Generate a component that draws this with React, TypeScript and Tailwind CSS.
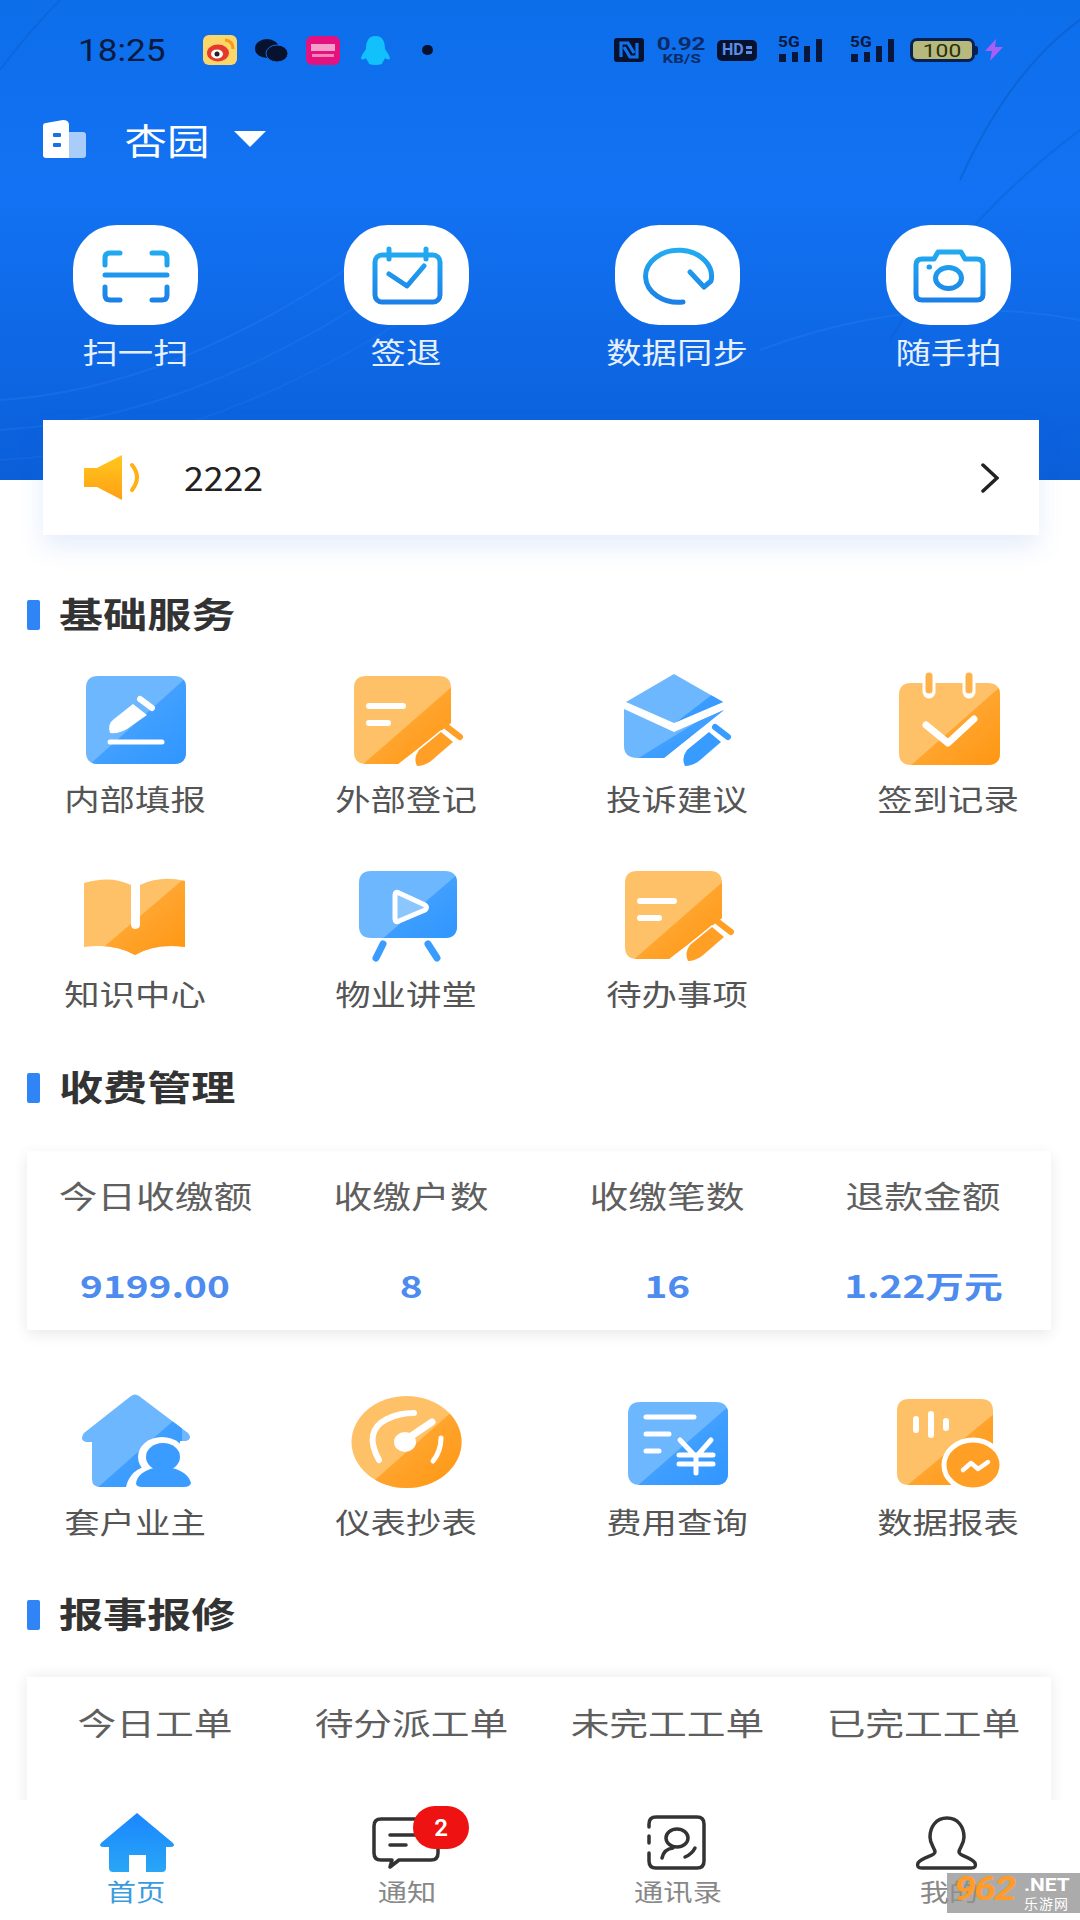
import { type ReactNode } from 'react';

const CJK = '"Noto Sans CJK SC", "Noto Sans", sans-serif';

// the screenshot is stretched sideways, so the text gets scaled too
function Label({ children, className = '' }: { children: ReactNode; className?: string }) {
  return <span className={`inline-block whitespace-nowrap scale-x-[1.22] ${className}`}>{children}</span>;
}

function TwoTone({ id, d, tone, cut }: { id: string; d: string; tone: 'blue' | 'orange'; cut: string }) {
  return (
    <>
      <clipPath id={id}>
        <polygon points={cut} />
      </clipPath>
      <path d={d} fill={tone === 'blue' ? '#6db7ff' : '#ffc168'} />
      <path d={d} fill={tone === 'blue' ? 'url(#dark-blue)' : 'url(#dark-orange)'} clipPath={`url(#${id})`} />
    </>
  );
}

function Pencil({ color }: { color: string }) {
  return (
    <>
      <path d="M80 96 Q76 88 82 80 L104 62 L116 72 L94 91 Q87 96 80 96Z" fill={color} stroke="#fff" strokeWidth="3" paintOrder="stroke" />
      <path d="M110 57 L123 67" stroke={color} strokeWidth="6" strokeLinecap="round" />
    </>
  );
}

const Box = ({ children, dy = 0 }: { children: ReactNode; dy?: number }) => (
  <svg viewBox={`0 ${dy} 140 100`} className="w-[140px] h-[100px] overflow-visible">
    {children}
  </svg>
);

const NOTE = 'M29 6 H102 Q114 6 114 18 V53 L61 94 H29 Q17 94 17 82 V18 Q17 6 29 6Z';

const NoteIcon = ({ id }: { id: string }) => (
  <Box>
    <TwoTone id={id} tone="orange" d={NOTE} cut="118,14 24,96 120,96" />
    <path d="M32 36 H66 M32 53 H51" stroke="#fff" strokeWidth="6" strokeLinecap="round" />
    <Pencil color="#ff9f25" />
  </Box>
);

const icons = {
  report: (
    <Box>
      <TwoTone id="c1" tone="blue" d="M32 6 H108 Q120 6 120 18 V82 Q120 94 108 94 H32 Q20 94 20 82 V18 Q20 6 32 6Z" cut="122,6 22,96 122,96" />
      <path d="M44 63 Q41 54 48 49 L67 34 L81 45 L61 59 Q53 64 44 63Z" fill="#fff" />
      <path d="M74 29 L86 38" stroke="#fff" strokeWidth="6" strokeLinecap="round" />
      <path d="M44 72 H96" stroke="#fff" strokeWidth="5" strokeLinecap="round" />
    </Box>
  ),
  visitor: <NoteIcon id="c2" />,
  complaint: (
    <Box>
      <TwoTone id="c3" tone="blue" d="M66 4 L115 32 L66 53 L18 32Z" cut="118,14 58,60 118,60" />
      <TwoTone id="c3b" tone="blue" d="M16 39 L66 62 L116 40 L56 88 H30 Q16 88 16 76Z" cut="118,34 24,92 118,92" />
      <path d="M77 96 Q73 88 79 80 L101 62 L113 72 L91 91 Q84 96 77 96Z" fill="#379bff" stroke="#fff" strokeWidth="3" paintOrder="stroke" />
      <path d="M107 57 L120 67" stroke="#379bff" strokeWidth="6" strokeLinecap="round" />
    </Box>
  ),
  signin: (
    <Box>
      <TwoTone id="c4" tone="orange" d="M32 13 H109 Q121 13 121 25 V83 Q121 95 109 95 H32 Q20 95 20 83 V25 Q20 13 32 13Z" cut="122,16 30,97 122,97" />
      <path d="M50 6 V22 M90 6 V22" stroke="#fff" strokeWidth="13" strokeLinecap="round" />
      <path d="M50 6 V20 M90 6 V20" stroke="#ffb24a" strokeWidth="7" strokeLinecap="round" />
      <path d="M47 55 L69 73 L95 49" fill="none" stroke="#fff" strokeWidth="7" strokeLinecap="round" strokeLinejoin="round" />
    </Box>
  ),
  book: (
    <Box>
      <TwoTone id="c5" tone="orange" d="M18 18 Q45 10 65 20 V60 Q65 64 69 64 Q74 64 74 60 V20 Q95 10 119 16 V82 Q90 78 69 90 Q48 78 18 82Z" cut="120,12 26,92 120,92" />
    </Box>
  ),
  lecture: (
    <Box>
      <TwoTone id="c6" tone="blue" d="M34 6 H108 Q120 6 120 18 V61 Q120 73 108 73 H34 Q22 73 22 61 V18 Q22 6 34 6Z" cut="122,8 44,75 122,75" />
      <path d="M46 79 L39 93 M91 79 L100 93" stroke="#3a9cff" strokeWidth="7" strokeLinecap="round" />
      <path d="M58 30 Q58 26 62 28 L88 40 Q91 42 88 45 L62 56 Q58 58 58 54Z" fill="#8cc6ff" stroke="#fff" strokeWidth="5" strokeLinejoin="round" />
    </Box>
  ),
  todo: <NoteIcon id="c7" />,
  owner: (
    <Box dy={6}>
      <TwoTone id="c8" tone="blue" d="M65 9 Q69 6 73 9 L122 46 Q127 52 120 54 L114 54 V100 H34 Q26 100 26 92 V55 L20 55 Q13 53 18 46Z" cut="116,26 30,102 116,102" />
      <ellipse cx="96" cy="70" rx="24" ry="20" fill="#fff" />
      <path d="M60 100 Q64 82 84 78 L112 78 L126 100Z" fill="#fff" />
      <ellipse cx="97" cy="70" rx="17" ry="14" fill="#3a9cff" />
      <path d="M70 96 Q72 85 88 81 H106 Q122 85 125 96 Q124 100 118 100 H76 Q70 100 70 96Z" fill="#3a9cff" />
    </Box>
  ),
  meter: (
    <Box dy={6}>
      <clipPath id="c9">
        <polygon points="118,22 30,100 130,104 130,22" />
      </clipPath>
      <ellipse cx="69.5" cy="55" rx="55" ry="46" fill="#ffc168" />
      <ellipse cx="69.5" cy="55" rx="55" ry="46" fill="url(#dark-orange)" clipPath="url(#c9)" />
      <path d="M42 73 Q26 44 50 32 Q62 26 77 26" fill="none" stroke="#fff" strokeWidth="6" strokeLinecap="round" />
      <ellipse cx="68" cy="55" rx="11" ry="10" fill="#fff" />
      <path d="M70 52 L95 35" stroke="#fff" strokeWidth="7" strokeLinecap="round" />
      <path d="M104 51 Q104 64 96 74" fill="none" stroke="#fff" strokeWidth="5" strokeLinecap="round" />
    </Box>
  ),
  fee: (
    <Box dy={6}>
      <TwoTone id="c10" tone="blue" d="M32 15 H108 Q120 15 120 27 V86 Q120 98 108 98 H32 Q20 98 20 86 V27 Q20 15 32 15Z" cut="122,18 28,100 122,100" />
      <path d="M38 30 H86 M38 47 H61 M38 64 H51" stroke="#fff" strokeWidth="5" strokeLinecap="round" />
      <path d="M72 53 L88 70 L103 53 M88 70 V86 M71 68 H105 M71 77 H105" fill="none" stroke="#fff" strokeWidth="5" strokeLinecap="round" />
    </Box>
  ),
  data: (
    <Box dy={6}>
      <TwoTone id="c11" tone="orange" d="M30 12 H102 Q114 12 114 24 V86 Q114 98 102 98 H30 Q18 98 18 86 V24 Q18 12 30 12Z" cut="116,26 26,100 116,100" />
      <path d="M37 32 V43 M52 27 V48 M67 34 V41" stroke="#fff" strokeWidth="6" strokeLinecap="round" />
      <ellipse cx="94" cy="78" rx="29" ry="25" fill="#ff9f25" stroke="#fff" strokeWidth="5" />
      <path d="M84 83 L92 76 L99 82 L109 75" fill="none" stroke="#fff" strokeWidth="4.5" strokeLinecap="round" strokeLinejoin="round" />
    </Box>
  ),
};

const quick = [
  {
    label: '扫一扫',
    icon: <path d="M32 40 V33 Q32 28 37 28 H47 M79 28 H89 Q94 28 94 33 V40 M32 50 H94 M32 62 V70 Q32 75 37 75 H47 M79 75 H89 Q94 75 94 70 V62" />,
  },
  {
    label: '签退',
    icon: (
      <>
        <rect x="31" y="30" width="65" height="47" rx="7" />
        <path d="M45 24 V34 M82 24 V34 M45 49 L63 61 L80 41" />
      </>
    ),
  },
  { label: '数据同步', icon: <path d="M68 77 A33 26 0 1 1 96 56 L89 62 L75 47" /> },
  {
    label: '随手拍',
    icon: (
      <>
        <path d="M36 34 H48 L52 27 H75 L79 34 H91 Q97 34 97 40 V69 Q97 75 91 75 H36 Q30 75 30 69 V40 Q30 34 36 34Z" />
        <ellipse cx="62.5" cy="53" rx="13" ry="10.5" />
        <path d="M43 42 H43.5" />
      </>
    ),
  },
];

const Tile = ({ label, icon }: { label: string; icon: ReactNode }) => (
  <div className="flex flex-col items-center">
    {icon}
    <div className="h-[56px] flex items-center text-[29px] leading-none text-[#555]">
      <Label>{label}</Label>
    </div>
  </div>
);

const SectionTitle = ({ children }: { children: string }) => (
  <div className="h-[60px] flex items-center pl-[27px]">
    <div className="w-[13px] h-[30px] rounded-[2px] bg-[#2f85f5]" />
    <span className="ml-[19px] -mt-[6px] inline-block origin-left scale-x-[1.26] text-[35px] leading-none font-bold text-[#333] whitespace-nowrap">
      {children}
    </span>
  </div>
);

const StatCell = ({ children }: { children: ReactNode }) => (
  <div className="flex justify-center items-center h-[40px] text-[31px] leading-none text-[#5f5f5f]">
    <span className="inline-block whitespace-nowrap scale-x-[1.25]">{children}</span>
  </div>
);

const Signal = () => (
  <div className="relative w-[46px] h-[26px]">
    <span className="absolute left-[1px] -top-[2px] inline-block origin-left scale-x-[1.15] text-[15px] leading-[15px] font-bold text-[#08183c]" style={{ fontFamily: 'Roboto' }}>
      5G
    </span>
    <svg viewBox="0 0 46 26" className="w-[46px] h-[26px]" fill="#08183c">
      <rect x="2" y="17" width="7" height="8" />
      <rect x="15" y="15" width="6" height="10" />
      <rect x="27" y="9" width="6" height="16" />
      <rect x="39" y="2" width="6" height="23" />
    </svg>
  </div>
);

function StatusBar() {
  return (
    <div className="h-[100px] flex items-center justify-between pl-[78px] pr-[77px] text-[#081a40]">
      <div className="flex items-center">
        <span className="w-[87px] inline-block origin-left scale-x-[1.1] text-[32px] leading-none whitespace-nowrap" style={{ fontFamily: 'Roboto' }}>
          18:25
        </span>
        {/* weibo */}
        <svg viewBox="0 0 34 30" className="ml-[38px] w-[34px] h-[30px]">
          <rect width="34" height="30" rx="6" fill="#fbd76a" />
          <ellipse cx="15" cy="18" rx="11" ry="8.5" fill="#e5392b" />
          <ellipse cx="14" cy="19" rx="6" ry="4.5" fill="#fff" />
          <circle cx="14" cy="19" r="2.5" fill="#222" />
          <path d="M22 5 Q30 6 30 14" fill="none" stroke="#f59a1c" strokeWidth="3" />
        </svg>
        {/* wechat */}
        <svg viewBox="0 0 33 23" className="ml-[18px] w-[33px] h-[23px]" fill="#07122f">
          <ellipse cx="12" cy="9.5" rx="12" ry="9.5" />
          <ellipse cx="22" cy="14.5" rx="11" ry="8.5" stroke="#0f6eea" strokeWidth="1" />
        </svg>
        {/* pink app */}
        <div className="ml-[18px] w-[34px] h-[29px] rounded-[6px] bg-[#e4127e] flex flex-col items-center justify-center gap-[3px]">
          <div className="w-[24px] h-[7px] bg-[#f5a0ca]" />
          <div className="w-[22px] h-[3px] bg-[#f283bb]" />
        </div>
        {/* qq */}
        <svg viewBox="0 0 31 29" className="ml-[20px] w-[31px] h-[29px]" fill="#12c0fb">
          <path d="M15.5 0 C7 0 6 8 6 13 C4 16 1 20 1 23 C3 24 5 23 6 22 C7 25 9 26 9 28 Q15.5 30 22 28 C22 26 24 25 25 22 C26 23 28 24 30 23 C30 20 27 16 25 13 C25 8 24 0 15.5 0Z" />
        </svg>
        <div className="ml-[31px] w-[11px] h-[10px] rounded-full bg-[#07122f]" />
      </div>
      <div className="flex items-center">
        {/* nfc */}
        <svg viewBox="0 0 30 24" className="w-[30px] h-[24px]">
          <rect width="30" height="24" rx="3" fill="#07122f" />
          <path d="M7 19 V5 L14 5 L20 15 M23 5 V19 L16 19 L10 9" fill="none" stroke="#1272ee" strokeWidth="3.2" />
        </svg>
        <div className="ml-[13px] w-[49px] flex flex-col items-center font-bold text-[#0b2a66]" style={{ fontFamily: 'Roboto' }}>
          <span className="inline-block scale-x-[1.35] text-[18px] leading-[15px]">0.92</span>
          <span className="inline-block scale-x-[1.3] mt-[2px] text-[13px] leading-[11px]">KB/S</span>
        </div>
        <div className="ml-[11px] w-[40px] h-[21px] rounded-[5px] bg-[#07122f] flex items-center pl-[5px] gap-[2px]">
          <span className="text-[#5b8fe6] text-[16px] leading-none font-bold" style={{ fontFamily: 'Roboto' }}>
            HD
          </span>
          <div className="flex flex-col gap-[2px]">
            <div className="w-[6px] h-[3px] bg-[#5b8fe6]" />
            <div className="w-[6px] h-[3px] bg-[#5b8fe6]" />
          </div>
        </div>
        <div className="ml-[20px]">
          <Signal />
        </div>
        <div className="ml-[26px]">
          <Signal />
        </div>
        <div className="ml-[15px] w-[65px] h-[24px] rounded-[7px] border-[3px] border-[#0a2050] bg-[#b7b97c] flex items-center justify-center text-[19px] leading-none text-[#27300c]" style={{ fontFamily: 'Roboto' }}>
          <span className="inline-block scale-x-[1.2]">100</span>
        </div>
        <div className="w-[3px] h-[9px] bg-[#0a2050] rounded-r-[2px]" />
        <svg viewBox="0 0 18 22" className="ml-[7px] w-[18px] h-[22px]" fill="#a85ff7">
          <path d="M11 0 L0 12 H7 L5 22 L18 8 H10Z" />
        </svg>
      </div>
    </div>
  );
}

function Header() {
  return (
    <div className="relative h-[480px] overflow-hidden bg-gradient-to-b from-[#0d6eea] via-[#1272f3] via-40% to-[#0b5fd9]">
      {/* faint streaks of the header artwork */}
      <svg viewBox="0 0 1080 480" className="absolute inset-0 w-[1080px] h-[480px]" fill="none">
        <path d="M1080 20 Q1010 70 960 180" stroke="#0a56bd" strokeOpacity=".45" strokeWidth="2" />
        <path d="M1080 130 Q960 220 890 340" stroke="#0a56bd" strokeOpacity=".3" strokeWidth="2" />
        <path d="M0 70 Q30 30 60 0" stroke="#0a56bd" strokeOpacity=".3" strokeWidth="2" />
        <path d="M0 400 Q170 390 360 260" stroke="#3d8ff5" strokeOpacity=".22" strokeWidth="2" />
        <path d="M0 430 Q190 420 390 285" stroke="#3d8ff5" strokeOpacity=".18" strokeWidth="2" />
        <path d="M0 460 Q200 450 420 310" stroke="#3d8ff5" strokeOpacity=".15" strokeWidth="2" />
        <path d="M760 350 Q920 290 1080 320" stroke="#3d8ff5" strokeOpacity=".22" strokeWidth="2" />
      </svg>
      <div className="relative">
        <StatusBar />
        <div className="h-[78px] flex items-center pl-[43px]">
          <svg viewBox="0 0 43 38" className="w-[43px] h-[38px]">
            <rect x="20" y="12" width="23" height="26" rx="3" fill="#a8cdf8" />
            <path d="M3 3 L20 0 Q26 0 26 5 V38 H3 Q0 38 0 35 V6 Q0 3 3 3Z" fill="#fff" />
            <rect x="10" y="13" width="8" height="4" rx="1" fill="#1a70e8" />
            <rect x="10" y="23" width="8" height="4" rx="1" fill="#1a70e8" />
          </svg>
          <span className="ml-[45px] inline-block scale-x-[1.18] text-[36px] leading-none text-white whitespace-nowrap">杏园</span>
          <svg viewBox="0 0 32 16" className="ml-[31px] w-[32px] h-[16px]" fill="#fff">
            <path d="M0 0 H32 L16 16Z" />
          </svg>
        </div>
        <div className="mt-[47px] grid grid-cols-[repeat(4,271px)]">
          {quick.map(item => (
            <div key={item.label} className="flex flex-col items-center">
              <div className="w-[125px] h-[100px] rounded-[44px] bg-white">
                <svg viewBox="0 0 125 100" className="w-[125px] h-[100px]" fill="none" stroke="url(#quick-blue)" strokeWidth="5" strokeLinecap="round" strokeLinejoin="round">
                  {item.icon}
                </svg>
              </div>
              <div className="mt-[2px] h-[48px] flex items-center text-[29px] leading-none text-[#e6f0ff]">
                <Label>{item.label}</Label>
              </div>
            </div>
          ))}
        </div>
      </div>
    </div>
  );
}

function Notice() {
  return (
    <div className="relative -mt-[60px] ml-[43px] mr-[41px] h-[115px] bg-white flex items-center shadow-[0_12px_24px_rgba(40,110,220,0.12)]">
      <svg viewBox="0 0 58 45" className="ml-[41px] w-[58px] h-[45px]">
        <defs>
          <linearGradient id="speaker" x1="0" y1="0" x2="0" y2="1">
            <stop offset="0" stopColor="#ffc81e" />
            <stop offset="1" stopColor="#ff9f14" />
          </linearGradient>
        </defs>
        <path d="M0 13 H13 L38 0 V45 L13 32 H0Z" fill="url(#speaker)" />
        <path d="M48 10 Q58 22 48 35" fill="none" stroke="#ffb114" strokeWidth="4" strokeLinecap="round" />
      </svg>
      <span className="ml-[42px] inline-block origin-left scale-x-[1.08] text-[33px] leading-none text-[#222]">2222</span>
      <svg viewBox="0 0 18 30" className="ml-auto mr-[40px] w-[18px] h-[30px]" fill="none" stroke="#222" strokeWidth="3.5" strokeLinecap="round">
        <path d="M2 2 L16 15 L2 28" />
      </svg>
    </div>
  );
}

function BottomNav() {
  const labelCls = 'mt-[4px] h-[30px] flex items-center text-[24px] leading-none';
  return (
    <div className="absolute left-0 right-0 bottom-0 h-[120px] bg-white pt-[12px] grid grid-cols-[repeat(4,271px)]">
      <div className="flex flex-col items-center">
        <svg viewBox="0 0 100 60" className="w-[100px] h-[60px]">
          <defs>
            <linearGradient id="home" x1="0" y1="0" x2="0" y2="1">
              <stop offset="0" stopColor="#1a86ff" />
              <stop offset="1" stopColor="#29a6f5" />
            </linearGradient>
          </defs>
          <path d="M51 1 L87 31 Q90 35 84 35 H80 V56 Q80 60 76 60 H60 V43 H43 V60 H27 Q23 60 23 56 V35 H18 Q12 35 15 31Z" fill="url(#home)" />
        </svg>
        <div className={`${labelCls} text-[#3b9be0]`}>
          <Label>首页</Label>
        </div>
      </div>
      <div className="relative flex flex-col items-center">
        <svg viewBox="0 0 100 60" className="w-[100px] h-[60px]" fill="none" stroke="#333" strokeWidth="3.5" strokeLinecap="round" strokeLinejoin="round">
          <path d="M62 7 H24 Q17 7 17 14 V41 Q17 48 24 48 H35 L33 55 L42 48 H74 Q81 48 81 41 V36" />
          <path d="M33 23 H59 M33 33 H49" />
        </svg>
        <div className="absolute left-[142px] top-[-6px] w-[56px] h-[43px] rounded-full bg-[#ee1212] flex items-center justify-center text-white text-[24px] font-semibold leading-none" style={{ fontFamily: 'Roboto' }}>
          2
        </div>
        <div className={`${labelCls} text-[#888]`}>
          <Label>通知</Label>
        </div>
      </div>
      <div className="flex flex-col items-center">
        <svg viewBox="0 0 100 60" className="-ml-[2px] w-[100px] h-[60px]" fill="none" stroke="#333" strokeWidth="3.5" strokeLinecap="round" strokeLinejoin="round">
          <path d="M22 15 V12 Q22 5 29 5 H70 Q77 5 77 12 V49 Q77 56 70 56 H29 Q22 56 22 49 V41 M22 24 V31" />
          <ellipse cx="50" cy="26" rx="11" ry="9" />
          <path d="M35 46 Q37 37 46 36 M58 45 Q65 42 68 36" />
        </svg>
        <div className={`${labelCls} text-[#888]`}>
          <Label>通讯录</Label>
        </div>
      </div>
      <div className="flex flex-col items-center">
        <svg viewBox="0 0 100 60" className="-ml-[2px] w-[100px] h-[60px]" fill="none" stroke="#333" strokeWidth="3.5" strokeLinecap="round" strokeLinejoin="round">
          <path d="M49 6 C38 6 32 15 32 25 C32 33 37 36 37 40 C37 44 24 45 20 51 Q18 56 24 56 H73 Q79 56 77 51 C73 45 61 44 61 40 C61 36 66 33 66 25 C66 15 60 6 49 6Z" />
        </svg>
        <div className={`${labelCls} text-[#888]`}>
          <Label>我的</Label>
        </div>
      </div>
    </div>
  );
}

function Watermark() {
  return (
    <div className="absolute right-0 bottom-[7px] w-[133px] h-[40px] bg-[#8f8f8f]/75 flex pl-[7px]">
      <span className="w-[70px] inline-block origin-left scale-x-[1.2] text-[33px] leading-[32px] font-bold italic text-[#ff9b26] tracking-tighter" style={{ fontFamily: 'Roboto' }}>
        962
      </span>
      <div className="flex flex-col text-white" style={{ fontFamily: 'Roboto' }}>
        <span className="inline-block origin-left scale-x-[1.1] text-[19px] leading-[23px] font-bold">.NET</span>
        <span className="text-[14px] leading-[15px] tracking-[1px]" style={{ fontFamily: CJK }}>
          乐游网
        </span>
      </div>
    </div>
  );
}

export default function App() {
  return (
    <div className="relative w-[1080px] h-[1920px] overflow-hidden bg-white" style={{ fontFamily: CJK }}>
      {/* shared gradients for the icons */}
      <svg className="absolute w-0 h-0">
        <defs>
          <linearGradient id="dark-blue" x1="0" y1="0" x2="1" y2="1">
            <stop offset="0" stopColor="#55acff" />
            <stop offset="1" stopColor="#2f95ff" />
          </linearGradient>
          <linearGradient id="dark-orange" x1="0" y1="0" x2="1" y2="1">
            <stop offset="0" stopColor="#ffb64f" />
            <stop offset="1" stopColor="#ff9612" />
          </linearGradient>
          <linearGradient id="quick-blue" gradientUnits="userSpaceOnUse" x1="0" y1="24" x2="0" y2="78">
            <stop offset="0" stopColor="#22acf0" />
            <stop offset="1" stopColor="#1b80e8" />
          </linearGradient>
        </defs>
      </svg>

      <Header />
      <Notice />

      <div className="mt-[50px]">
        <SectionTitle>基础服务</SectionTitle>
      </div>
      <div className="mt-[25px] grid grid-cols-[repeat(4,271px)] gap-y-[39px]">
        <Tile label="内部填报" icon={icons.report} />
        <Tile label="外部登记" icon={icons.visitor} />
        <Tile label="投诉建议" icon={icons.complaint} />
        <Tile label="签到记录" icon={icons.signin} />
        <Tile label="知识中心" icon={icons.book} />
        <Tile label="物业讲堂" icon={icons.lecture} />
        <Tile label="待办事项" icon={icons.todo} />
      </div>

      <div className="mt-[37px]">
        <SectionTitle>收费管理</SectionTitle>
      </div>
      <div className="mt-[33px] mx-[27px] w-[1024px] h-[179px] pt-[23px] bg-white shadow-[0_4px_14px_rgba(0,0,0,0.09)]">
        <div className="grid grid-cols-4">
          {['今日收缴额', '收缴户数', '收缴笔数', '退款金额'].map(t => (
            <StatCell key={t}>{t}</StatCell>
          ))}
        </div>
        <div className="mt-[50px] grid grid-cols-4">
          {['9199.00', '8', '16', '1.22万元'].map(v => (
            <div key={v} className="flex justify-center items-center h-[40px] text-[31px] leading-none font-semibold text-[#4d8bef]">
              <span className="inline-block whitespace-nowrap scale-x-[1.25]">{v}</span>
            </div>
          ))}
        </div>
      </div>

      <div className="mt-[63px] grid grid-cols-[repeat(4,271px)]">
        <Tile label="套户业主" icon={icons.owner} />
        <Tile label="仪表抄表" icon={icons.meter} />
        <Tile label="费用查询" icon={icons.fee} />
        <Tile label="数据报表" icon={icons.data} />
      </div>

      <div className="mt-[36px]">
        <SectionTitle>报事报修</SectionTitle>
      </div>
      <div className="mt-[32px] mx-[27px] w-[1024px] h-[200px] pt-[24px] bg-white shadow-[0_0_14px_rgba(0,0,0,0.09)]">
        <div className="grid grid-cols-4">
          {['今日工单', '待分派工单', '未完工工单', '已完工工单'].map(t => (
            <StatCell key={t}>{t}</StatCell>
          ))}
        </div>
      </div>

      <BottomNav />
      <Watermark />
    </div>
  );
}
